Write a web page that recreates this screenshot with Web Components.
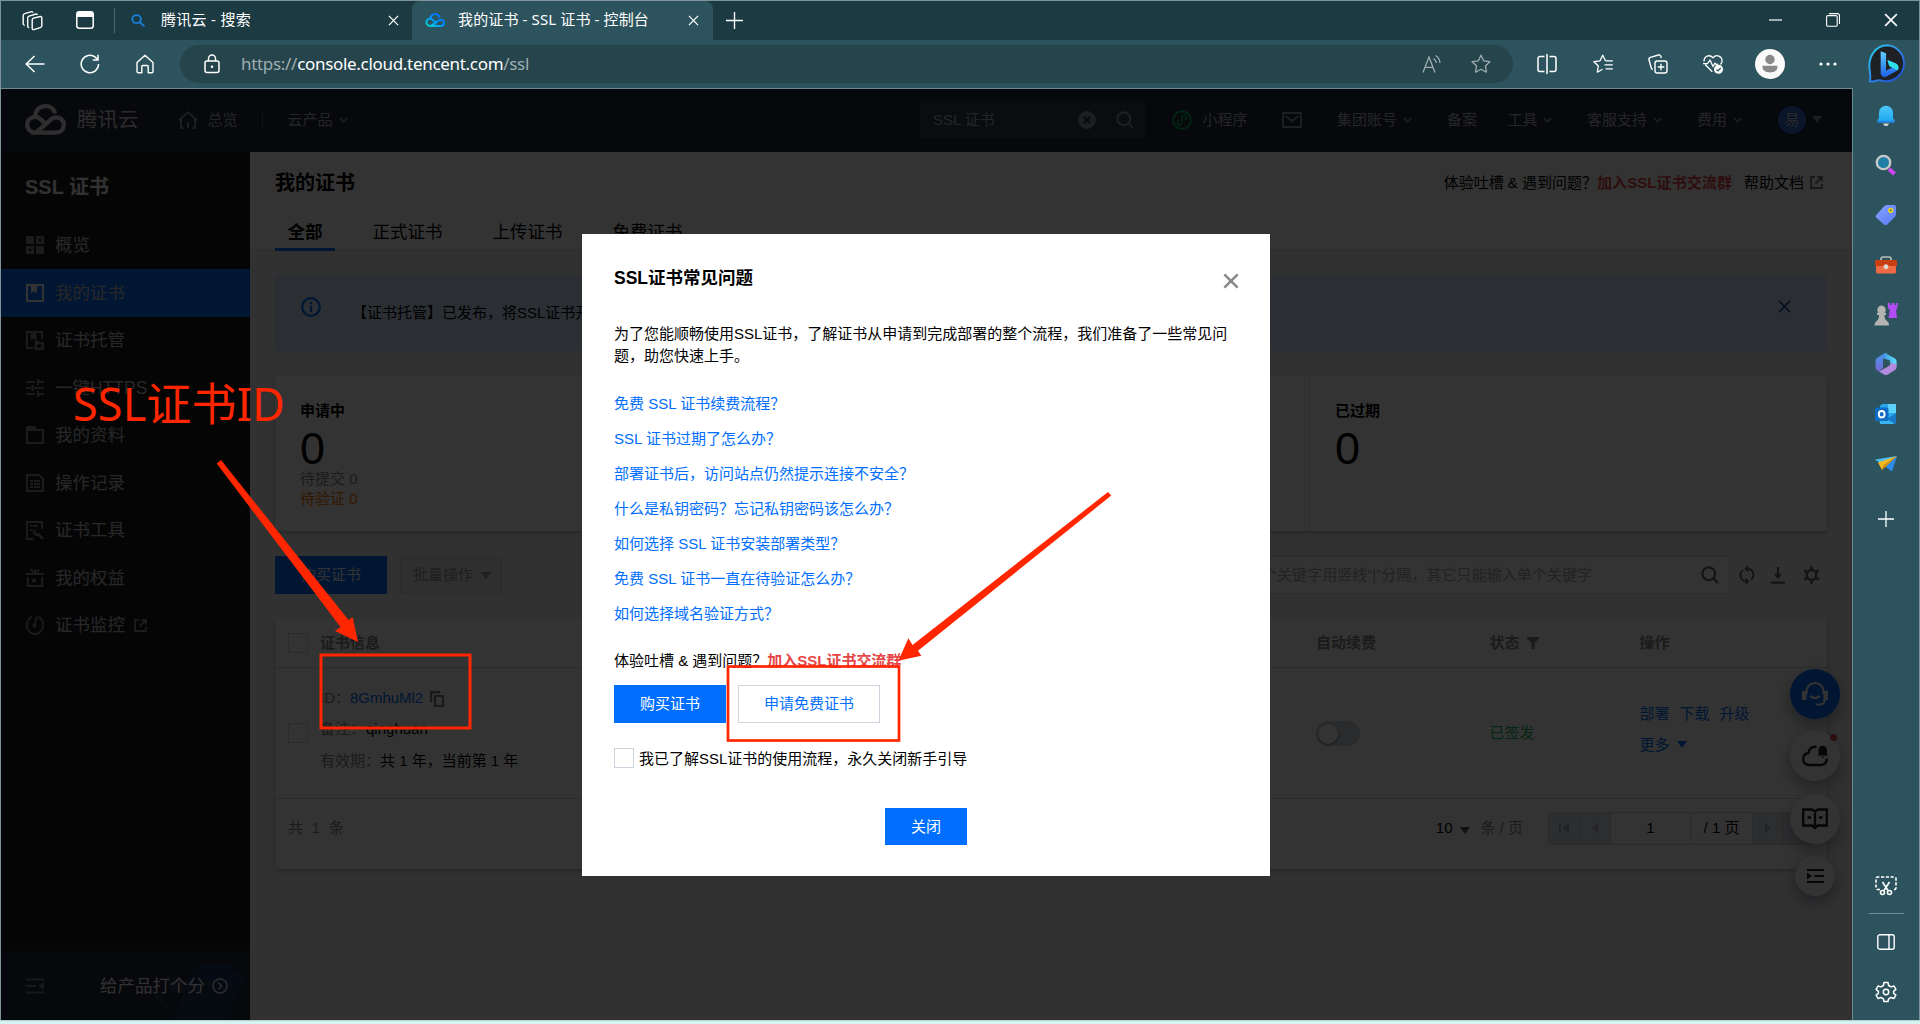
<!DOCTYPE html>
<html lang="zh-CN">
<head>
<meta charset="utf-8">
<title>我的证书 - SSL 证书 - 控制台</title>
<style>
html,body{margin:0;padding:0;background:#d4f3f1}
body{width:1920px;height:1024px;overflow:hidden;font:15px/22px "Liberation Sans","Noto Sans CJK SC",sans-serif;color:#000}
</style>
</head>
<body>
<app-window></app-window>
<script>
const BASE = `*{box-sizing:border-box}:host{display:block}a{color:inherit;text-decoration:none}.f{display:flex;align-items:center}`;
const queue = [];
function component(name, css, html) {
  queue.push([name, class extends HTMLElement {
    constructor() {
      super();
      this.attachShadow({mode: 'open'}).innerHTML = `<style>${BASE}${css}</style>${html}`;
    }
  }]);
}

/* ---------- icons ---------- */
const S = 'fill="none" stroke="currentColor"';
const ICONS = {
  spaces: ['0 0 22 22', `<g ${S} stroke-width="1.4" stroke-linejoin="round"><path d="M12.500 8.500 19.300 6.800a1.300 1.300 0 0 1 1.500 1.400V16.500a2 2 0 0 1-1.500 1.900L12.800 20.600a1.300 1.300 0 0 1-1.600-1.300V10.400a2 2 0 0 1 1.300-1.900z"/><path d="M8.300 18.400a1.300 1.300 0 0 1-1.600-1.300V8.200a2 2 0 0 1 1.400-1.900L15 4.200a1.300 1.300 0 0 1 1.500 1"/><path d="M3.800 15.800a1.300 1.300 0 0 1-1.600-1.300V5.700a2 2 0 0 1 1.400-1.900L10.500 1.700a1.300 1.300 0 0 1 1.500 1"/></g>`],
  pane: ['0 0 18 18', `<rect x=".8" y=".8" width="16.400" height="16.400" rx="2.500" ${S} stroke-width="1.500"/><path d="M1 3.500A2.500 2.500 0 0 1 3.500 1h11A2.500 2.500 0 0 1 17 3.500V6H1z" fill="currentColor"/>`],
  find: ['0 0 14 14', `<g ${S} stroke-width="1.900" stroke-linecap="round"><circle cx="5.600" cy="5.600" r="4.300"/><path d="M8.800 8.800 12.800 12.800"/></g>`],
  x: ['0 0 12 12', `<path d="M1 1 11 11M11 1 1 11" ${S} stroke-width="1.400"/>`],
  xb: ['0 0 12 12', `<path d="M1 1 11 11M11 1 1 11" ${S} stroke-width="1.900"/>`],
  plus: ['0 0 16 16', `<path d="M8 0V16M0 8H16" ${S} stroke-width="1.300"/>`],
  tc: ['0 0 20 14', `<defs><linearGradient id="g" x1="0" y1="1" x2="1" y2="0"><stop offset="0" stop-color="#00d5c8"/><stop offset=".5" stop-color="#0090ff"/><stop offset="1" stop-color="#0064ff"/></linearGradient></defs><g fill="none" stroke="url(#g)" stroke-width="2"><path d="M5.500 6.200C5.300 3 7.500 1.100 10 1.100c2.400 0 4 1.500 4.500 3.300M12 8.500l-6 4.400H5A3.600 3.600 0 1 1 7.500 6.700L10 9M7.500 12.900 13 7.800c1.700-1.500 6-1.200 6 2 0 2-1.500 3.100-3 3.100z"/></g>`],
  back: ['0 0 20 18', `<path d="M9.500 1 1.200 9l8.300 8M1.200 9H19.500" ${S} stroke-width="1.500"/>`],
  reload: ['0 0 20 20', `<path d="M18.600 10A8.700 8.700 0 1 1 15.500 3.400L17.800 5.800M18 .8V6H12.800" ${S} stroke-width="1.500"/>`],
  house: ['0 0 18 20', `<path d="M1 8.500 9 1.200l8 7.300V17.500a1.200 1.200 0 0 1-1.200 1.200H12.200V12.500a1 1 0 0 0-1-1H6.800a1 1 0 0 0-1 1v6.200H2.200A1.200 1.200 0 0 1 1 17.500z" ${S} stroke-width="1.400" stroke-linejoin="round"/>`],
  lock: ['0 0 16 20', `<g ${S} stroke-width="1.500"><rect x="1" y="7" width="14" height="11.500" rx="2"/><path d="M4.500 7V4.500a3.500 3.500 0 0 1 7 0V7"/></g><circle cx="8" cy="12.700" r="1.300" fill="currentColor"/>`],
  read: ['0 0 20 20', `<g ${S} stroke-width="1.300"><path d="M1 18.500 7 3l6 15.500M3 13.300H11M11.500 4.500c1.700 1 2.700 2.500 2.900 4.500M13.500 1.500c2.800 1.500 4.300 4.300 4.500 7.500"/></g>`],
  star: ['0 0 20 20', `<path d="M10 1.200 12.700 6.800 18.900 7.700 14.400 12 15.500 18.200 10 15.300 4.500 18.200 5.600 12 1.100 7.700 7.300 6.800z" ${S} stroke-width="1.300" stroke-linejoin="round"/>`],
  split: ['0 0 20 20', `<path d="M7.500 2.500H3A2 2 0 0 0 1 4.500v11a2 2 0 0 0 2 2H7.500M12.500 2.500H17a2 2 0 0 1 2 2v11a2 2 0 0 1-2 2H12.500M10 0V20" ${S} stroke-width="1.500"/>`],
  favs: ['0 0 20 20', `<g ${S} stroke-width="1.300" stroke-linejoin="round"><path d="M12.500 6.800 9.700 1.200 7 6.800.9 7.700 5.300 12 4.300 18.200 9.500 15.300M12.500 6.800H19.800M11.500 10.800H19.800M12.500 14.800H19.800"/></g>`],
  coll: ['0 0 20 20', `<g ${S} stroke-width="1.400" stroke-linejoin="round"><path d="M4.800 15.500A2 2 0 0 1 3.300 14L1 5.800A2 2 0 0 1 2.400 3.400L10.500 1a2 2 0 0 1 2.400 1.400L13.200 4"/><rect x="7" y="7" width="12" height="12" rx="2.200"/><path d="M13 9.700V16.300M9.700 13H16.300"/></g>`],
  heart: ['0 0 20 20', `<g ${S} stroke-width="1.300" stroke-linejoin="round"><path d="M9.300 17.700 2.200 10.500M1 7.500C.8 2.200 6.500-.2 10 3.800c3.400-4 9-1.700 9.100 3 0 1.500-.6 2.500-1.500 3.700M0 9.700H4.500L7 6l3 6.500L12 9.200l1.200 1.300H15"/></g><circle cx="15.500" cy="15.300" r="4.500" fill="#fff"/><path d="M13.500 15.500 15 17l2.700-3" fill="none" stroke="#2d545e" stroke-width="1.200"/>`],
  user: ['0 0 30 30', `<circle cx="15" cy="15" r="15" fill="#fbfafa"/><circle cx="15" cy="10.500" r="4.700" fill="#8b8888"/><path d="M7.500 16.800h15v1.200c0 3.600-3.300 5.400-7.500 5.400s-7.500-1.800-7.500-5.400z" fill="#8b8888"/>`],
  dots: ['0 0 18 4', `<g fill="currentColor"><circle cx="2" cy="2" r="1.600"/><circle cx="9" cy="2" r="1.600"/><circle cx="16" cy="2" r="1.600"/></g>`],
  bing: ['0 0 40 40', `<defs><linearGradient id="a" x1="0" y1="0" x2="1" y2="1"><stop offset="0" stop-color="#29d2ee"/><stop offset=".45" stop-color="#2e8de8"/><stop offset="1" stop-color="#1c3fd0"/></linearGradient><linearGradient id="b" x1="0" y1="0" x2="0" y2="1"><stop offset="0" stop-color="#5ed2ff"/><stop offset="1" stop-color="#1d5fe8"/></linearGradient></defs><path d="M20 1.300A18.500 18.500 0 1 1 15.500 38C10 35.500 6 39.500 1.800 38.300 3 35 2.300 31 1.800 27 -.5 13 8 1.300 20 1.300z" fill="#1e2024" stroke="url(#a)" stroke-width="2"/><path d="M13 7.500 18.500 9.600V27.500L24.800 24 21.800 22.500 19.800 16.500 28.600 20A4.600 4.600 0 0 1 30 27.200L19 33.300a4 4 0 0 1-6-3.300z" fill="url(#b)"/><path d="M20 16.500 28.600 20a4.600 4.600 0 0 1 1.700 7L24.800 24l-3-1.500z" fill="#2fe0e8"/>`],
  min: ['0 0 14 14', `<path d="M0 7H13" ${S} stroke-width="1.200"/>`],
  max: ['0 0 14 14', `<g ${S} stroke-width="1.100"><rect x=".6" y="2.600" width="10.600" height="10.600" rx="1.300"/><path d="M3 .600H11.500a2 2 0 0 1 2 2V11"/></g>`],
  logo: ['0 0 41 31', `<g ${S} stroke-width="4.300"><path d="M10.500 13.500C9.500 6.500 14.500 2.200 20.500 2.200c5 0 8.700 3 9.700 7.300M11 28.500C5.500 28.500 2.200 25 2.200 20.600 2.200 13 11.200 11 15.500 15.100L20.500 20M11 28.600 26 15.300c5-4.200 12.800-1 12.800 5.300 0 4.700-3.300 8-8 8H11z"/></g>`],
  home2: ['0 0 20 18', `<path d="M1 9.200 10 1.300l9 7.900M3 8V17.200M17 8V17.200M10 11V17.500M2 17H5.500M14.500 17H18" ${S} stroke-width="2"/>`],
  chev: ['0 0 9 6', `<path d="M.8 1 4.500 4.500 8.200 1" ${S} stroke-width="1.700"/>`],
  tri: ['0 0 10 7', `<path d="M0 0H10L5 7z" fill="currentColor"/>`],
  clear: ['0 0 18 18', `<circle cx="9" cy="9" r="9" fill="currentColor"/><path d="M6 6 12 12M12 6 6 12" stroke="#303a48" stroke-width="2.200"/>`],
  srch: ['0 0 18 18', `<g ${S} stroke-width="2.200"><circle cx="7.800" cy="7.800" r="6.400"/><path d="M12.300 12.300 17 17"/></g>`],
  mini: ['0 0 20 20', `<g ${S} stroke-width="1.900"><circle cx="10" cy="10" r="8.800"/><path stroke-width="1.500" d="M7.800 10.300A2.300 2.300 0 1 0 10 12.700V7.300a2.300 2.300 0 1 1 2.200 2.400"/></g>`],
  mail: ['0 0 20 16', `<path d="M1 1H19V15H1zM3.500 4 10 9l6.500-5" ${S} stroke-width="2"/>`],
  ext: ['0 0 13 13', `<path d="M5 1H1V12H12V8M7.500 1H12V5.500M12 1 5.500 7.500" ${S} stroke-width="1.800"/>`],
  grid: ['0 0 18 18', `<g fill="currentColor"><path d="M0 0H8V8H0z"/><path fill-rule="evenodd" d="M10 0H18V8H10zM12.800 2.800V5.200H15.200V2.800z"/><path fill-rule="evenodd" d="M0 10H8V18H0zM2.800 12.800V15.200H5.200V12.800z"/><path d="M10 10H18V18H10z"/></g>`],
  cert: ['0 0 18 18', `<path d="M1 1H17V17H1z" ${S} stroke-width="2.200"/><path d="M5 2H11V9.500L8 7.300 5 9.500z" fill="currentColor"/>`],
  host: ['0 0 19 19', `<path d="M7.500 17H1V1H17V8" ${S} stroke-width="2.200"/><path d="M5 2H11V9.500L8 7.300 5 9.500zM9 9.500H13L14 11H19V19H9z" fill="currentColor"/><rect x="11.500" y="13.500" width="5" height="3" fill="#16191e"/>`],
  sliders: ['0 0 18 18', `<path d="M0 3H9M12 3H18M12 0V6M0 9H5M8 9H18M6.500 6V12M0 15H9M12 15H18M12 12V18" ${S} stroke-width="2"/>`],
  folder: ['0 0 18 18', `<path d="M1 17V1H8.500L10 4H17V17z" ${S} stroke-width="2.200"/><path d="M0 0H9L11 5H0z" fill="currentColor"/>`],
  log: ['0 0 18 18', `<path d="M1 1H13L17 5V17H1z" ${S} stroke-width="2"/><path d="M4 7H7M8 7H14M4 10H7M8 10H14M4 13H7M8 13H14" ${S} stroke-width="1.800"/>`],
  tool: ['0 0 19 19', `<path d="M8 18H1V1H17V8M4.500 5H7M8 5H12M4.500 9H7" ${S} stroke-width="2"/><path d="M12.500 12.500 18 18M9 9.500v2.500l1.800 1.800H13" ${S} stroke-width="2.800"/>`],
  gift: ['0 0 20 18', `<path d="M2 8V17H18V8M0 5H20M5.500 0 8 4M14.500 0 12 4M10 0V4" ${S} stroke-width="2.200"/><circle cx="9" cy="11.500" r="2.200" fill="currentColor"/>`],
  gauge: ['0 0 20 20', `<path d="M6.500 1.700a9 9 0 1 0 7 0" ${S} stroke-width="2"/><circle cx="9.500" cy="10.500" r="2.200" fill="currentColor"/><path d="M10 10 12 1.500" ${S} stroke-width="2"/>`],
  fold: ['0 0 18 16', `<path d="M0 1.500H18M0 8H10M0 14.500H18" ${S} stroke-width="2.200"/><path d="M18 4V12L12 8z" fill="currentColor"/>`],
  go: ['0 0 16 16', `<g ${S} stroke-width="1.500"><circle cx="8" cy="8" r="7"/><path d="M6.500 4.800 9.700 8l-3.200 3.200"/></g>`],
  info: ['0 0 20 20', `<circle cx="10" cy="10" r="8.800" ${S} stroke-width="2.200"/><path d="M10 5V7.200M10 8.800V15" ${S} stroke-width="2.200"/>`],
  sync: ['0 0 16 20', `<g ${S} stroke-width="2"><path d="M9.500 3.800A6.300 6.300 0 0 1 12 15M6.500 16.200A6.300 6.300 0 0 1 4 5"/></g><path d="M9.500 0V7.500L5.500 3.800zM6.500 20V12.500L10.500 16.200z" fill="currentColor"/>`],
  down: ['0 0 14 17', `<path d="M7 0V10M0 15.700H14" ${S} stroke-width="2.200"/><path d="M2.800 6.800H11.200L7 12z" fill="currentColor"/>`],
  cog: ['0 0 18 18', `<circle cx="9" cy="9" r="5" ${S} stroke-width="2.400"/><path d="M9 0V4M9 14V18M1.200 4.500 4.700 6.500M13.300 11.500 16.800 13.500M1.200 13.500 4.700 11.500M13.300 6.500 16.800 4.500" ${S} stroke-width="2.600"/>`],
  funnel: ['0 0 12 12', `<path d="M0 0H12V1.500L7.700 6V12H4.500V6L0 1.500z" fill="currentColor"/>`],
  copy: ['0 0 14 16', `<path d="M1 11V1H10" ${S} stroke-width="2.400"/><path d="M5 5H13V15H5z" ${S} stroke-width="2.200"/>`],
  first: ['0 0 10 10', `<path d="M0 0H2V10H0zM10 0V10L3 5z" fill="currentColor"/>`],
  prev: ['0 0 6 10', `<path d="M6 0V10L0 5z" fill="currentColor"/>`],
  next: ['0 0 6 10', `<path d="M0 0V10L6 5z" fill="currentColor"/>`],
  headset: ['0 0 26 26', `<path d="M4.500 13V10.500a8.500 8.500 0 0 1 17 0V13M22.500 18v1.500a4 4 0 0 1-4 4H14" ${S} stroke-width="2.200"/><path d="M0 10H4.500V19H0zM21.500 10H26V19H21.500z" fill="currentColor"/><path d="M8.500 14.500c1.500 3.300 7.500 3.300 9 0" ${S} stroke-width="2.200"/>`],
  cloudbell: ['0 0 26 22', `<path d="M14.500 2C10 .800 6.800 4.500 6.500 8 3.500 8.500 1.200 10.800 1.200 14c0 3.500 2.500 6 6 6H19c4 0 6-3 5.800-6.500" ${S} stroke-width="2.400"/><path d="M16.500 9V5a4.200 4.200 0 0 1 8.400 0V9l1 1.500H15.500zM19 11.500h3.500l-1.800 1.700z" fill="currentColor"/>`],
  book: ['0 0 26 22', `<path d="M1.200 1.500H10L13 3.500 16 1.500H24.800V17.500H16L13 20 10 17.500H1.200zM13 3.500V19M5.500 9.500H9M17 9.500H20.500" ${S} stroke-width="2.300"/>`],
  indent: ['0 0 17 14', `<path d="M0 1H17M7.500 7H17M0 13H17" ${S} stroke-width="1.900"/><path d="M0 3.500V10.500L5 7z" fill="currentColor"/>`],
  bell: ['0 0 20 22', `<defs><linearGradient id="a" x1="0" y1="0" x2="0" y2="1"><stop offset="0" stop-color="#4cc9fb"/><stop offset="1" stop-color="#1ba5ee"/></linearGradient></defs><path d="M7 18.500H13L11.500 21H8.500z" fill="#d0d0d0"/><path d="M3 7.800a7 7 0 0 1 14 0V13l1.500 2.500V17.500H1.500V15.500L3 13z" fill="url(#a)"/><path d="M1.800 16.500H18.200" stroke="#2283f0" stroke-width="1.600"/>`],
  lens: ['0 0 22 22', `<circle cx="8.500" cy="8.500" r="6.700" fill="#1f7fa6" stroke="#c9c9c9" stroke-width="2.300"/><path d="M14 15 19.500 19.800" stroke="#d142f5" stroke-width="4.200"/>`],
  tag: ['0 0 22 22', `<defs><linearGradient id="a" x1="0" y1="0" x2="1" y2="1"><stop offset="0" stop-color="#84a4ff"/><stop offset="1" stop-color="#5a78f5"/></linearGradient></defs><path d="M12 1H19a2 2 0 0 1 2 2v7.500a3 3 0 0 1-.8 2L12.500 20.300a2.500 2.500 0 0 1-3.500.2L1.700 14a2.300 2.300 0 0 1 0-3.500L9.500 2A3.500 3.500 0 0 1 12 1z" fill="url(#a)"/><circle cx="15.700" cy="6.300" r="1.900" fill="#394" stroke="#f7d21e" stroke-width="1.500"/>`],
  case: ['0 0 24 18', `<path d="M7 4V3a2 2 0 0 1 2-2h6a2 2 0 0 1 2 2V4" fill="none" stroke="#b9bcbc" stroke-width="1.700"/><path d="M2 9H22V16a1.500 1.500 0 0 1-1.500 1.500h-17A1.500 1.500 0 0 1 2 16z" fill="#ee6a42"/><path d="M1 5.500A1.500 1.500 0 0 1 2.500 4h19A1.500 1.500 0 0 1 23 5.500V10H1z" fill="#c93f12"/><path d="M12 8l2.300 1.500V12L12 13.500 9.700 12V9.500z" fill="#d9d9d9"/>`],
  chess: ['0 0 24 24', `<path d="M13.500 1H16V3H17.500V1H20.500V3H22V1H24L23 7.500H22l1 8.500h-8.500L16 7.500H14.500z" fill="#b44cf5"/><path d="M7.500 3.500a4.300 4.300 0 0 1 3 7.300H12V13H10.500c0 3 .500 4.500 3 6.500 1.200 1 1.500 2 1.500 4H.500c0-2 .5-3 1.700-4C4.500 17.500 5 16 5 13H3V10.800H4.500a4.300 4.300 0 0 1 3-7.300z" fill="#b5b3b1"/>`],
  m365: ['0 0 22 24', `<defs><linearGradient id="a" x1="0" y1="0" x2="1" y2="0"><stop offset="0" stop-color="#3d8fe0"/><stop offset="1" stop-color="#5fe0f7"/></linearGradient><linearGradient id="b" x1="0" y1="0" x2="0" y2="1"><stop offset="0" stop-color="#3f9be6"/><stop offset="1" stop-color="#7a63d8"/></linearGradient></defs><path d="M10 1 20 6.500Q21.500 7.500 21.500 9V15L15 11V8.500L7 6z" fill="url(#a)"/><path d="M21.500 12V15.500Q21.500 17 20 18L12.500 22.700Q11 23.500 9.500 22.700L4 19.500 14 14 16 11z" fill="#b48ade"/><path d="M9.500 1.300 12 1 10 5.500 8 7V16L4 19.500 1.800 18Q.5 17 .5 15.500V8.500Q.5 7 2 6z" fill="url(#b)"/>`],
  outlook: ['0 0 22 22', `<path d="M7 1H19.500A1.500 1.500 0 0 1 21 2.500V20H5V3z" fill="#2aa7ea"/><path d="M13 1H21V10H13z" fill="#5cd2fb"/><path d="M21 10 12 16l9 5z" fill="#1877c6"/><path d="M4 13 20 21H5z" fill="#37b6f1"/><rect x="0" y="4.500" width="13.500" height="13.500" rx="1.500" fill="#0f6cc4"/><ellipse cx="6.700" cy="11.200" rx="2.900" ry="3.200" fill="none" stroke="#fff" stroke-width="1.900"/>`],
  plane: ['0 0 22 18', `<path d="M0 4.500 22 1 8 10z" fill="#4cc0f5"/><path d="M22 1 17 16.500 8 10z" fill="#2d8ce8"/><path d="M22 1 3 7.500 7 15 9 10z" fill="#f5b81e"/><path d="M22 1 9 10 6.500 15.500 10.500 12z" fill="#d98f0d"/>`],
  snip: ['0 0 22 20', `<g ${S} stroke-width="1.600"><path d="M5 13.500H3A1.800 1.800 0 0 1 1 11.700V3A1.800 1.800 0 0 1 3 1H19A1.800 1.800 0 0 1 21 3v8.700A1.800 1.800 0 0 1 19 13.500H17.500" stroke-dasharray="3.200 1.600"/><path d="M7.500 6 13 14.500M14.500 6 9 14.500"/><circle cx="7.500" cy="16.500" r="2"/><circle cx="14.500" cy="16.500" r="2"/></g>`],
  side: ['0 0 18 16', `<g ${S} stroke-width="1.400"><rect x=".8" y=".8" width="16.400" height="14.400" rx="2"/><path d="M12 1V15"/></g>`],
  gear: ['0 0 22 22', `<path d="M9 1.500H13L13.600 4.500 16 5.900 19 5 20.900 8.400 18.600 10.400V12.300L20.900 14 19 17.500 16 16.500 13.600 17.900 13 20.500H9L8.400 17.900 6 16.500 3 17.500 1.100 14 3.400 12.300V10.400L1.100 8.400 3 5 6 5.900 8.400 4.500z" ${S} stroke-width="1.500" stroke-linejoin="round"/><circle cx="11" cy="11" r="2.700" ${S} stroke-width="1.500"/>`]
};
queue.push(['ui-icon', class extends HTMLElement {
  connectedCallback() {
    if (this.shadowRoot) return;
    const [vb, body] = ICONS[this.getAttribute('n')];
    const d = vb.split(' ');
    const w = this.getAttribute('w') || d[2], h = this.getAttribute('h') || d[3];
    this.attachShadow({mode: 'open'}).innerHTML =
      `<style>:host{display:inline-block;flex:none;width:${w}px;height:${h}px}svg{display:block;width:100%;height:100%}</style><svg viewBox="${vb}" preserveAspectRatio="none">${body}</svg>`;
  }
}]);

/* ---------- browser chrome ---------- */
component('browser-tab', `:host{height:39px;flex:none}.t{height:39px;display:flex;align-items:center;color:#fff;font:15px/20px "Noto Sans","Noto Sans CJK SC",sans-serif;padding-right:13px}
:host([active]) .t{background:#2d545e;border-radius:8px 8px 0 0;padding-right:14px}slot:not([name]){display:block;margin-top:-3px}.x{margin-left:auto}`,
`<div class="t"><slot name="icon"></slot><slot></slot><ui-icon class="x" n="x" w="11" h="11"></ui-icon></div>`);

component('title-bar', `:host{height:39px;background:#1b3a42;color:#fff}.r{height:38px}.s{width:1px;height:25px;background:#4c6b72;margin-left:20px}
.a{width:297px}.b{width:301px}`,
`<div class="f r"><ui-icon n="spaces" w="22" h="21" style="margin-left:20px"></ui-icon><ui-icon n="pane" style="margin-left:33px"></ui-icon><div class="s"></div>
<browser-tab class="a"><ui-icon slot="icon" n="find" w="14" h="13" style="color:#1a7fdc;margin:0 16px 0 16px"></ui-icon><fit-text w="90">腾讯云 - 搜索</fit-text></browser-tab>
<browser-tab class="b" active><ui-icon slot="icon" n="tc" style="margin:0 13px 0 13px"></ui-icon><fit-text w="191">我的证书 - SSL 证书 - 控制台</fit-text></browser-tab>
<ui-icon n="plus" w="17" h="17" style="margin-left:13px"></ui-icon>
<ui-icon n="min" style="margin-left:1026px"></ui-icon><ui-icon n="max" style="margin-left:43px"></ui-icon><ui-icon n="x" w="14" h="14" style="margin-left:44px"></ui-icon></div>`);

component('address-bar', `:host{height:48px;background:#2d545e;color:#fff}.r{height:47px}.u{width:1333px;height:38px;border-radius:19px;background:#26444c;margin-left:26px;padding-left:24px;font:17px/24px "Noto Sans",sans-serif;color:#9fadb1}
b{font-weight:400;color:#fff}`,
`<div class="f r"><ui-icon n="back" style="margin-left:24px"></ui-icon><ui-icon n="reload" style="margin-left:35px"></ui-icon><ui-icon n="house" style="margin-left:36px"></ui-icon>
<div class="f u"><ui-icon n="lock" style="color:#fff;margin-right:21px"></ui-icon><fit-text w="288">https://<b>console.cloud.tencent.com</b>/ssl</fit-text><ui-icon n="read" style="margin-left:893px"></ui-icon><ui-icon n="star" style="margin-left:29px"></ui-icon></div>
<ui-icon n="split" style="margin-left:24px"></ui-icon><ui-icon n="favs" style="margin-left:36px"></ui-icon><ui-icon n="coll" style="margin-left:35px"></ui-icon><ui-icon n="heart" style="margin-left:35px"></ui-icon><ui-icon n="user" style="margin-left:32px"></ui-icon><ui-icon n="dots" style="margin-left:34px"></ui-icon><ui-icon n="bing" w="39" h="39" style="margin-left:31px"></ui-icon></div>`);

component('app-rail', `:host{width:66px;background:#2d545e;color:#fff}.c{height:100%;display:flex;flex-direction:column;align-items:center;padding-bottom:18px}
.i{height:50px;display:flex;align-items:center;justify-content:center;flex:none}.l{width:35px;height:1px;background:#6f8f96;margin:17px 0 2px}`,
`<div class="c"><div class="i" style="margin-top:3px"><ui-icon n="bell"></ui-icon></div><div class="i" style="margin-top:-1px"><ui-icon n="lens"></ui-icon></div><div class="i"><ui-icon n="tag"></ui-icon></div><div class="i"><ui-icon n="case"></ui-icon></div><div class="i" style="margin-top:-1px"><ui-icon n="chess"></ui-icon></div><div class="i"><ui-icon n="m365"></ui-icon></div><div class="i"><ui-icon n="outlook"></ui-icon></div><div class="i"><ui-icon n="plane"></ui-icon></div><div class="i" style="height:59px"><ui-icon n="plus"></ui-icon></div>
<ui-icon n="snip" style="margin-top:auto"></ui-icon><div class="l"></div><div class="i" style="height:52px"><ui-icon n="side"></ui-icon></div><div class="i" style="height:48px;margin-bottom:-14px"><ui-icon n="gear"></ui-icon></div></div>`);

/* ---------- console ---------- */
component('console-nav', `:host{height:63px;background:#24283c;color:#b4b8c2}.r{height:61px;white-space:nowrap}span{flex:none}ui-icon{color:#8f949f}
.s{width:225px;height:37px;background:#2f4050;padding-left:13px}.av{width:28px;height:28px;border-radius:50%;background:#2d6fd0;text-align:center;line-height:27px;color:#ccd}.c{margin-left:6px}`,
`<div class="f r"><ui-icon n="logo" style="margin-left:24px;color:#e6e6e6"></ui-icon><span style="margin-left:11px;font-size:20.5px;color:#d8d8d8">腾讯云</span>
<ui-icon n="home2" style="margin-left:39px"></ui-icon><span style="margin-left:10px">总览</span><i style="width:1px;height:20px;background:#555a6a;margin-left:24px"></i><span style="margin-left:25px">云产品</span><ui-icon class="c" n="chev"></ui-icon>
<div class="f s" style="margin-left:auto">SSL 证书<ui-icon n="clear" style="margin-left:83px"></ui-icon><ui-icon n="srch" style="margin-left:20px"></ui-icon></div>
<ui-icon n="mini" style="margin-left:27px;color:#0ab35a"></ui-icon><span style="margin-left:10.500px">小程序</span><ui-icon n="mail" style="margin-left:34.500px"></ui-icon>
<span style="margin-left:35px">集团账号</span><ui-icon class="c" n="chev"></ui-icon><span style="margin-left:35px">备案</span><span style="margin-left:30.500px">工具</span><ui-icon class="c" n="chev"></ui-icon><span style="margin-left:34.500px">客服支持</span><ui-icon class="c" n="chev"></ui-icon><span style="margin-left:35px">费用</span><ui-icon class="c" n="chev"></ui-icon>
<div class="av" style="margin-left:36px">易</div><ui-icon n="tri" style="margin:0 30px 0 6px"></ui-icon></div>`);

component('menu-item', `.m{height:47.500px;padding-left:25px;font-size:17.500px;color:#c2c4c7}.m ui-icon,::slotted(ui-icon){color:#85888c;width:18px;margin-right:11px}
:host([on]) .m{background:#006eff}:host([on]) ::slotted(ui-icon){color:#fff}`,
`<div class="f m"><slot name="i"></slot><slot></slot></div>`);

component('side-menu', `:host{width:249px;flex:none;background:#191b20}.c{height:100%;display:flex;flex-direction:column}
h2{margin:0;height:69.500px;line-height:71px;padding-left:24px;font-size:20px;color:#f4f4f4}
.b{margin-top:auto;height:69px;background:#24283c;position:relative;overflow:hidden;padding-left:25px;font-size:17.500px;color:#f0f0f0}.b svg{position:absolute;right:0;top:0}.b>ui-icon,.b>span{position:relative}`,
`<div class="c"><h2>SSL 证书</h2>
<menu-item><ui-icon slot="i" n="grid"></ui-icon>概览</menu-item><menu-item on><ui-icon slot="i" n="cert"></ui-icon>我的证书</menu-item><menu-item><ui-icon slot="i" n="host"></ui-icon>证书托管</menu-item><menu-item><ui-icon slot="i" n="sliders"></ui-icon>一键HTTPS</menu-item><menu-item><ui-icon slot="i" n="folder"></ui-icon>我的资料</menu-item><menu-item><ui-icon slot="i" n="log"></ui-icon>操作记录</menu-item><menu-item><ui-icon slot="i" n="tool"></ui-icon>证书工具</menu-item><menu-item><ui-icon slot="i" n="gift"></ui-icon>我的权益</menu-item><menu-item><ui-icon slot="i" n="gauge"></ui-icon>证书监控<span style="margin-left:9px;color:#8a8d90;line-height:0"><ui-icon n="ext"></ui-icon></span></menu-item>
<div class="f b"><svg width="110" height="69" viewBox="0 0 110 69"><path d="M33 69 52 18 100 20 104 25 88 69z" fill="#1f3358"/><path d="M58 18 64 12 92 15 95 34 60 28z" fill="#1c3966"/><path d="M24 24 50 30 60 46 30 40z M0 26 20 46 29 56 22 55z" fill="#343a50"/></svg><ui-icon n="fold" style="color:#777c8a"></ui-icon><span style="margin-left:56px">给产品打个分</span><ui-icon n="go" style="margin-left:7px;color:#e0e0e0"></ui-icon></div></div>`);

component('stat-cell', `:host{width:517px;flex:none;padding:24px 25px}b{display:block}.n{font-size:45px;line-height:45px;margin-top:4px}::slotted(div){line-height:19.500px;position:relative;top:-2px}`,
`<b><slot name="t"></slot></b><div class="n">0</div><slot></slot>`);

component('cert-table', `:host{height:251px;background:#fff;box-shadow:0 2px 4px rgba(54,58,80,.32)}
.g{display:grid;grid-template-columns:32px 996px 173.500px 150px 1fr;padding-left:13px;align-items:center}
.h{height:50px;border-bottom:1px solid #d5d8de;color:#888;font-weight:700}.k{width:20px;height:20px;border:1px solid #cfd5de}
.r{height:131px;border-bottom:1px solid #d5d8de}.m{color:#888}.l{color:#006eff}.info{margin-top:-8px}.info div{height:31.500px;line-height:31.500px}.sw{width:44px;height:25px;border-radius:13px;background:#cfd5de;padding:3px 2px}.sw i{display:block;width:20px;height:20px;border-radius:50%;background:#fff;box-shadow:0 1px 3px #777}
.p{height:58px;padding-left:13px;color:#888}.pg{height:33px;border:1px solid #cfd5de;margin-right:13px;color:#000}.pg div{height:31px;display:flex;align-items:center;justify-content:center;border-right:1px solid #cfd5de}.d{background:#e2e5ea;color:#b0b3b8}.d ui-icon{flex:none}`,
`<div class="g h"><div class="k"></div><div>证书信息</div><div>自动续费</div><div class="f">状态<ui-icon n="funnel" style="margin-left:7px"></ui-icon></div><div>操作</div></div>
<div class="g r"><div class="k"></div><div class="info"><div class="f"><span class="m">ID：</span><span class="l"><fit-text w="73">8GmhuMl2</fit-text></span><ui-icon n="copy" style="margin-left:7px;margin-top:3px;color:#777"></ui-icon></div><div><span class="m">备注：</span><span style="margin-left:1px">qinghuan</span></div><div><span class="m">有效期：</span>共 1 年，当前第 1 年</div></div>
<div class="sw"><i></i></div><div style="color:#0abf5b">已签发</div><div class="l" style="line-height:31px;margin-top:-8px"><span>部署</span><span style="margin-left:10px">下载</span><span style="margin-left:10px">升级</span><br>更多<ui-icon n="tri" w="10" h="7" style="margin-left:7px;vertical-align:2px"></ui-icon></div></div>
<div class="f p"><span style="word-spacing:4.500px">共 1 条</span><span style="margin-left:auto;color:#000">10</span><ui-icon n="tri" style="margin:5px 10px 0 8px;color:#555"></ui-icon><span style="margin-right:25px">条 / 页</span>
<div class="f pg"><div class="d" style="width:31px"><ui-icon n="first"></ui-icon></div><div class="d" style="width:31px"><ui-icon n="prev"></ui-icon></div><div style="width:80px">1</div><div style="width:62px">/ 1 页</div><div class="d" style="width:31px"><ui-icon n="next"></ui-icon></div><div class="d" style="width:29px;border:0"></div></div></div>`);

component('cert-page', `:host{flex:1;min-width:0;background:#f3f4f7}.h{height:99px;background:#fff;border-bottom:1px solid #e3e5ea}.t{height:60px;padding:1px 29px 0 25px}h1{font-size:20px;margin:0}
.tabs{height:38.500px;font-size:17.500px;padding-left:25px}.tabs span{height:39px;line-height:41px;padding:0 12.500px;margin-right:25px}.tabs .on{font-weight:700;border-bottom:3px solid #006eff}
.b{padding:25px 25px 0}.al{height:75px;background:#d5e7ff;color:#000;padding:0 36px 0 26px}.card{height:155px;background:#fff;display:flex;margin:25px 0;box-shadow:0 2px 4px rgba(54,58,80,.32)}
.ops{height:38px;margin-bottom:24px}.p{width:112px;height:38px;background:#006eff;color:#fff;text-align:center;line-height:38px}.q{width:102px;height:38px;border:1px solid #cfd5de;background:#e9ebef;color:#999;margin-left:13px;padding-left:12px}
.s{margin-left:auto;width:520px;height:38px;border:1px solid #cfd5de;background:#fff;color:#a8a8a8;padding-right:10px;justify-content:flex-end}.ops>ui-icon,.s ui-icon{color:#666}`,
`<div class="h"><div class="f t"><h1>我的证书</h1><span style="margin-left:auto">体验吐槽 &amp; 遇到问题？</span><b style="color:#e54545;margin-right:12px"><fit-text w="135">加入SSL证书交流群</fit-text></b><span>帮助文档</span><ui-icon n="ext" style="margin-left:6px;color:#777"></ui-icon></div>
<div class="f tabs"><span class="on">全部</span><span>正式证书</span><span>上传证书</span><span>免费证书</span></div></div>
<div class="b"><div class="f al"><ui-icon n="info" style="color:#006eff;margin-top:-14px"></ui-icon><span style="margin:-2px 0 0 31px">【证书托管】已发布，将SSL证书开</span><ui-icon n="x" w="13" h="13" style="color:#003a88;margin:-14px 0 0 auto"></ui-icon></div>
<div class="card"><stat-cell><span slot="t">申请中</span><div style="color:#888">待提交 0</div><div style="color:#ff7200">待验证 0</div></stat-cell><div style="width:518px;border-right:1px solid #e3e5ea"></div><stat-cell><span slot="t">已过期</span></stat-cell></div>
<div class="f ops"><div class="p">购买证书</div><div class="f q">批量操作<ui-icon n="tri" style="margin-left:8px"></ui-icon></div><div class="f s"><fit-text w="330">个关键字用竖线“|”分隔，其它只能输入单个关键字</fit-text><ui-icon n="srch" style="margin-left:109px"></ui-icon></div><ui-icon n="sync" style="margin-left:9px"></ui-icon><ui-icon n="down" style="margin-left:16px"></ui-icon><ui-icon n="cog" w="17" h="18" style="margin:0 7px 0 18px"></ui-icon></div>
<cert-table></cert-table></div>`);

component('float-dock', `:host{position:absolute;right:12px;top:580px;width:50px}.c{width:50px;height:50px;border-radius:50%;background:#fff;display:flex;align-items:center;justify-content:center;margin-bottom:12px;box-shadow:0 6px 16px rgba(40,50,70,.45);position:relative;color:#222}.d{position:absolute;width:7px;height:7px;border-radius:50%;background:#e54545;right:3px;top:3px}`,
`<div class="c" style="background:#006eff;color:#fff"><ui-icon n="headset"></ui-icon></div><div class="c" style="margin-bottom:13px"><ui-icon n="cloudbell"></ui-icon><i class="d"></i></div><div class="c"><ui-icon n="book"></ui-icon></div><div class="c" style="width:40px;height:40px;margin-left:5px"><ui-icon n="indent"></ui-icon></div>`);

component('faq-link', `:host{height:35px;line-height:35px;color:#006eff}`, `<a><slot></slot></a>`);

component('faq-dialog', `:host{width:688px;height:642px;background:#fff;padding:31px 30px 0 32px}.t{height:26px}h3{margin:0;font-size:17.500px;line-height:26px}p{margin:32px 0 0;line-height:22px}.links{margin-top:19px}
.btn{height:38px;line-height:36px;text-align:center;border:1px solid #006eff;background:#006eff;color:#fff}.w{background:#fff;border-color:#cfd5de;color:#006eff}.k{width:20px;height:20px;border:1px solid #cfd5de;margin-right:5px}`,
`<div class="f t"><h3>SSL证书常见问题</h3><ui-icon n="xb" w="16" h="16" style="color:#888;margin:5px 1px 0 auto"></ui-icon></div>
<p>为了您能顺畅使用SSL证书，了解证书从申请到完成部署的整个流程，我们准备了一些常见问题，助您快速上手。</p>
<div class="links"><faq-link>免费 SSL 证书续费流程？</faq-link><faq-link>SSL 证书过期了怎么办？</faq-link><faq-link>部署证书后，访问站点仍然提示连接不安全？</faq-link><faq-link>什么是私钥密码？忘记私钥密码该怎么办？</faq-link><faq-link>如何选择 SSL 证书安装部署类型？</faq-link><faq-link>免费 SSL 证书一直在待验证怎么办？</faq-link><faq-link>如何选择域名验证方式？</faq-link></div>
<div class="f" style="height:22px;margin-top:19px">体验吐槽 &amp; 遇到问题？<b style="color:#e54545"><fit-text w="134">加入SSL证书交流群</fit-text></b></div>
<div class="f" style="margin-top:13px"><div class="btn" style="width:112px">购买证书</div><div class="btn w" style="width:142px;margin-left:12px">申请免费证书</div></div>
<div class="f" style="margin-top:25px;height:20px"><div class="k"></div><span style="margin-top:1px">我已了解SSL证书的使用流程，永久关闭新手引导</span></div>
<div class="btn" style="width:82px;height:37px;line-height:35px;margin:40px 0 0 271px">关闭</div>`);

component('console-page', `:host{position:relative;width:1852px;height:932px;border-top:1px solid #6b898f;border-right:1px solid #6b898f;overflow:hidden;background:#f3f4f7}.m{display:flex;height:868px}.mask{position:absolute;inset:0;background:rgba(0,0,0,.8);display:flex;justify-content:center;padding:145px 1px 0 0}`,
`<console-nav></console-nav><div class="m"><side-menu></side-menu><cert-page></cert-page></div><float-dock></float-dock><div class="mask"><faq-dialog></faq-dialog></div>`);

/* red marker notes laid over the window */
component('mark-layer', `:host{position:absolute;left:0;top:0;width:1920px;height:1024px;pointer-events:none}svg{position:absolute;left:0;top:0}.t{position:absolute;left:73px;top:376px;font:45px/56px "Noto Sans","Noto Sans CJK SC",sans-serif;color:#ff2600;white-space:nowrap}`,
`<svg width="1920" height="1024"><g fill="none" stroke="#ff2600"><rect x="321" y="655" width="149" height="73" stroke-width="3"/><rect x="728" y="666.500" width="171" height="74" stroke-width="2.700"/></g><g fill="#ff2600"><path d="M216.700 463.500 221 460 348.500 620 352.600 617 358 642 335 631 340.500 627z"/><path d="M1108 492 1111.300 495.500 918 650.700 921.300 655.700 898.300 660.700 908.400 638.300 912.500 645z"/></g></svg><div class="t"><fit-text w="212">SSL证书ID</fit-text></div>`);

component('app-window', `:host{position:relative;width:1920px;height:1024px}.w{display:flex;flex-direction:column;width:1920px;height:1020px;border:1px solid #7d959a;border-bottom:0;background:#2d545e}.r{display:flex;height:932px}.e{height:4px;background:linear-gradient(#a5c4c4,#d4f3f1 40%)}`,
`<div class="w"><title-bar></title-bar><address-bar></address-bar><div class="r"><console-page></console-page><app-rail></app-rail></div></div><div class="e"></div><mark-layer></mark-layer>`);

/* tracks its text so that the run fills the given width */
queue.push(['fit-text', class extends HTMLElement {
  connectedCallback() {
    if (this.shadowRoot) return;
    this.attachShadow({mode: 'open'}).innerHTML = `<style>:host{display:inline-block;white-space:nowrap;flex:none}</style><slot></slot>`;
    const w = +this.getAttribute('w');
    const now = this.getBoundingClientRect().width;
    this.style.letterSpacing = (w - now) / this.textContent.length + 'px';
  }
}]);
queue.forEach(([n, c]) => customElements.define(n, c));
</script>
</body>
</html>
